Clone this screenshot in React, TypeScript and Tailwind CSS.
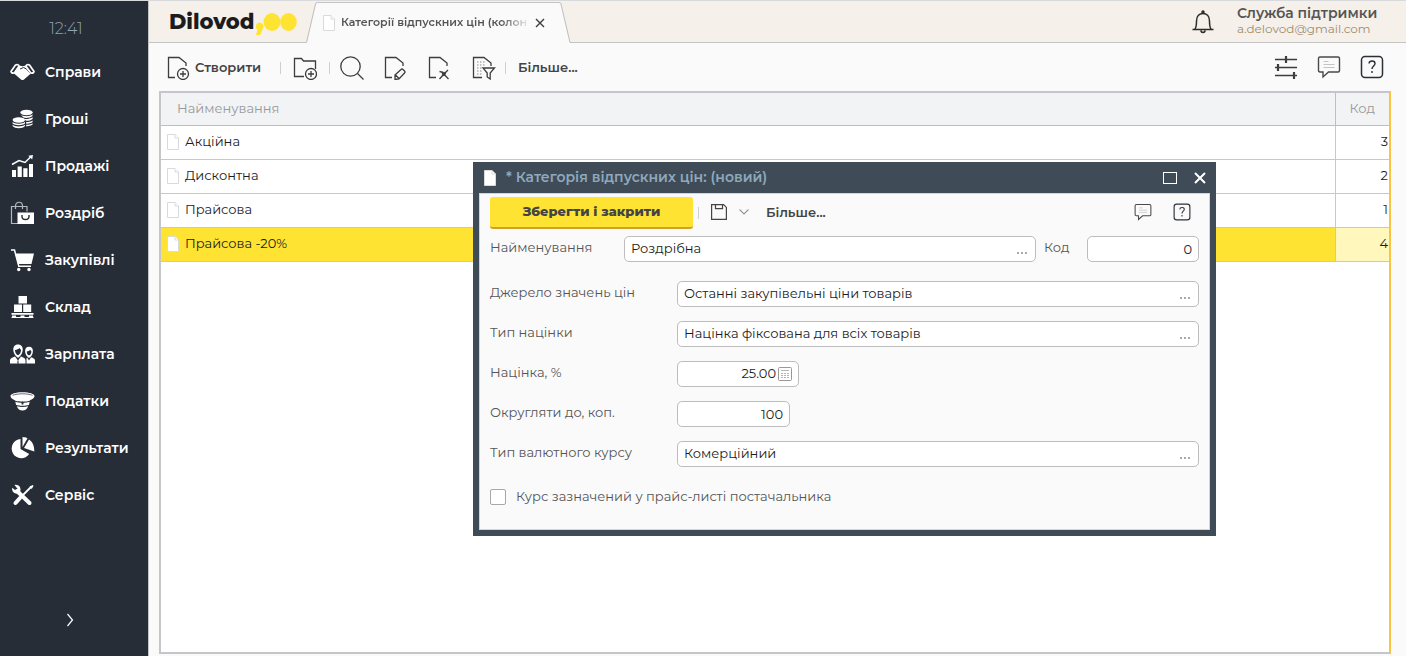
import type { ReactNode } from 'react';

const navItems: { label: string; icon: ReactNode }[] = [
  {
    label: 'Справи',
    icon: (
      <>
        <path d="M9 5.500l3.500.7 3.500-.7 5.500 7.500-7.800 6.700q-1.200.8-2.400 0L3.500 13z" />
        <path d="m10 9 3.500-1.500 3 1.500 4 4.500" fill="none" stroke="#272d37" strokeWidth="1" />
        <path d="M1 11.500 5.500 5q3-1 3.500 1.200L4.200 13q-3 .5-3.200-1.500zM24 11.500 19.500 5q-3-1-3.500 1.200L20.800 13q3 .5 3.200-1.500z" fill="#272d37" stroke="white" strokeWidth="1.700" strokeLinejoin="round" />
      </>
    ),
  },
  {
    label: 'Гроші',
    icon: (
      <>
        <ellipse cx="16.500" cy="5.500" rx="6.200" ry="2.800" />
        <path d="M10.500 7.500c2 2 9 2.500 12 0v1.500c-2 2-7 2.300-9 1.500zM14 12c3 .3 6.500-.2 8.600-1.700V12c-2 1.500-4.500 2-6.600 1.800zM16.200 15c2.500 0 4.800-.5 6.400-1.600V15c-1.500 1.300-4 1.800-6.400 1.700zM16.200 17.800c2.500 0 4.800-.5 6.400-1.600v1.300c-1.500 1.300-4 1.800-6.400 1.700z" />
        <ellipse cx="8.800" cy="13" rx="6.200" ry="2.700" />
        <path d="M2.600 15c2.500 2.300 9.500 2.300 12.400 0v1.500c-2.500 2.200-9.900 2.200-12.400 0zM2.600 17.800c2.500 2.300 9.500 2.300 12.400 0v1.200c-2.500 3-9.900 3-12.400 0z" />
      </>
    ),
  },
  {
    label: 'Продажі',
    icon: (
      <>
        <path d="M2 16h4v7H2zM7.600 12.500h4.200V23H7.600zM13.300 14.200h4.200V23h-4.200zM19 10h4v13h-4z" />
        <path d="m2 10.500 7-4 6 2 5.500-5.500" fill="none" stroke="white" strokeWidth="1.500" />
        <path d="m18.300 1.700 4.700-.7-.8 4.500z" />
      </>
    ),
  },
  {
    label: 'Роздріб',
    icon: (
      <>
        <path d="M8 22.500H1.500v-17H17v5M5.500 8V5c0-5 7-5 7 0v3" fill="none" stroke="#b3b8be" strokeWidth="1.200" />
        <path d="M7.500 11.500H24V23H7.500z" />
        <path d="M12 14v1.500c0 4 7 4 7 0V14" fill="none" stroke="#272d37" strokeWidth="1.400" />
      </>
    ),
  },
  {
    label: 'Закупівлі',
    icon: (
      <>
        <path d="M5 5.500h19L21.500 16H8z" />
        <path d="M1 2h3.500l4.300 16.300H21" fill="none" stroke="white" strokeWidth="1.500" />
        <circle cx="8.700" cy="21.500" r="1.700" />
        <circle cx="19" cy="21.500" r="1.700" />
      </>
    ),
  },
  {
    label: 'Склад',
    icon: (
      <>
        <path d="M8.500 1H17v7.500H8.500zM4 9.500h8v7.500H4zM13.200 9.500h8v7.500h-8zM1.500 18h22v1.700h-22zM2 20.500h4v2H2zM10.500 20.500h4v2h-4zM19 20.500h4v2h-4z" />
        <path d="M1.500 22.500h22" fill="none" stroke="white" strokeWidth="1" />
      </>
    ),
  },
  {
    label: 'Зарплата',
    icon: (
      <>
        <path d="M8 2.500c3.500 0 4.800 2.500 4.700 5.300-.1 2.700-1.200 4.700-2.500 6.200L8 16l-2.200-2C4.500 12.500 3.400 10.500 3.300 7.800 3.200 5 4.500 2.500 8 2.500z" />
        <path d="M5 8c2-.2 3.500-.8 4.500-2L11 8c0 2.500-1.500 5-3 5s-3-2.500-3-5z" fill="#272d37" />
        <path d="M0 21.500v-3.300c0-2 2.500-2.800 5-3.700l3 4 3-4c2.500.9 4.500 1.700 4.500 3.700v3.300z" />
        <path d="M19 4.800c2.800 0 4 2 3.900 4.400 0 2.300-1 4-2 5.300L19 16l-1.900-1.500c-1-1.300-2-3-2-5.300C15 6.800 16.200 4.800 19 4.800z" />
        <path d="M16.800 9.500c1.300-.2 2.500-.7 3.400-1.700l1.200 1.700c0 2-1.200 3.800-2.400 3.800s-2.200-1.800-2.200-3.800z" fill="#272d37" />
        <path d="M16.500 21.500V16.500l.700-1 1.800 3 2-3.300c2 .7 4 1.300 4 3.300v3z" />
        <path d="m8 17-.800 4.500h1.600z" fill="#272d37" />
      </>
    ),
  },
  {
    label: 'Податки',
    icon: (
      <>
        <path d="M.5 7c0-2 5-3.700 12-3.700s12 1.700 12 3.700c0 2.500-3 3.500-5 4.800-4 1.200-10 1.200-14 0C3.500 10.500.5 9.500.5 7z" />
        <path d="M2.500 6.300c5-2 15-2 20 0" fill="none" stroke="#272d37" strokeWidth=".7" />
        <path d="M5.300 12.800c4 1.300 10.400 1.300 14.400 0l-.800 3.200c-3.500 1-9.300 1-12.800 0z" />
        <path d="m12.500 12.300 1.200 1-.400 2.200h-1.600l-.400-2.200z" fill="#272d37" />
        <path d="M6.800 17.300c3.500.9 7.900.9 11.400 0-1 2.800-3 4.300-5.700 4.300s-4.700-1.500-5.700-4.300z" />
      </>
    ),
  },
  {
    label: 'Результати',
    icon: (
      <>
        <path d="M10.500 3v10l8.700 5A9.600 9.600 0 1 1 10.500 3z" />
        <path d="M12.500 1c2 .1 3.500.5 5 1.200L12.500 11zM19 3.500c3.500 2.300 5.500 6.500 5.300 12L14 12z" />
      </>
    ),
  },
  {
    label: 'Сервіс',
    icon: (
      <>
        <path d="m7 8 12.500 12" stroke="white" strokeWidth="4" strokeLinecap="round" />
        <path d="M4.500 2C8 1 11.500 4 10.300 8.300L8 10.700C4.500 11.200 1.500 8.500 2.200 4.800l3.500 2.700 1.800-1.800z" />
        <path d="m21.500 3.500-9 9" stroke="white" strokeWidth="1.800" />
        <path d="m19.500 3.700 3.200-1.700.8.8-1.700 3.200z" />
        <path d="m10 15-4.500 5" stroke="white" strokeWidth="4" strokeLinecap="round" />
      </>
    ),
  },
];

const rows = [
  { name: 'Акційна', code: 3 },
  { name: 'Дисконтна', code: 2 },
  { name: 'Прайсова', code: 1 },
  { name: 'Прайсова -20%', code: 4, selected: true },
];

function LineIcon({ children }: { children: ReactNode }) {
  return (
    <svg viewBox="0 0 24 24" className="h-6 w-6 shrink-0" fill="none" stroke="#3d3d3d" strokeWidth="1.300">
      {children}
    </svg>
  );
}

function DocIcon({ className = '' }: { className?: string }) {
  return (
    <svg viewBox="0 0 12 16" className={`h-4 w-3 shrink-0 ${className}`} fill="white" stroke="#dadada">
      <path d="M.5.5h7.500l3.500 3.500v11.500H.5z" />
      <path d="M8 .5V4h3.500" />
    </svg>
  );
}

function ChatIcon({ className }: { className: string }) {
  return (
    <svg viewBox="0 0 24 24" className={className} fill="none" stroke="#4a4a4a" strokeWidth="1.400">
      <path d="M3 2h18q1.500 0 1.500 1.500v12q0 1.500-1.500 1.500H11.500L6 22v-5H3q-1.500 0-1.500-1.500v-12Q1.500 2 3 2z" />
      <path d="M6.500 6.500h5M6.500 9.500h11M6.500 12.500h11" stroke="#c4c4c4" strokeWidth="1" />
    </svg>
  );
}

function HelpIcon({ className }: { className: string }) {
  return (
    <svg viewBox="0 0 24 24" className={className} fill="none" stroke="#2b2f36" strokeWidth="1.500">
      <rect x="1.500" y="1.500" width="21" height="21" rx="3.500" />
      <path d="M9 8.500c.3-3.300 6-3.300 6 0 0 2.500-3 2.500-3 5.500M12 16v2" strokeWidth="1.400" />
    </svg>
  );
}

function Separator() {
  return <span className="h-3 w-px shrink-0 bg-[#cfcfcf]" />;
}

function Sidebar() {
  return (
    <aside className="flex w-[148px] shrink-0 flex-col bg-[#272d37]">
      <time className="mt-4 pr-4 text-center text-base leading-6 font-light text-[#8fa3b3]">12:41</time>
      <nav className="mt-[7px]">
        {navItems.map((item) => (
          <a
            key={item.label}
            href="#"
            className="flex h-[47px] items-center gap-[10px] pl-[10px] text-sm font-semibold text-white"
          >
            <svg viewBox="0 0 25 24" className="h-6 w-[25px] shrink-0" fill="white">
              {item.icon}
            </svg>
            {item.label}
          </a>
        ))}
      </nav>
      <button aria-label="Згорнути меню" className="mt-auto mb-6 ml-[58px] flex h-6 w-6 items-center justify-center">
        <svg viewBox="0 0 8 14" className="h-[14px] w-2" fill="none" stroke="white" strokeWidth="1.200">
          <path d="m1.500 1 5 6-5 6" />
        </svg>
      </button>
    </aside>
  );
}

function Logo() {
  return (
    <div className="flex h-full w-[157px] items-center border-b border-[#c4c4c4] pl-5">
      <span className="w-[86px] text-[21px] font-extrabold whitespace-nowrap text-[#1c1c1c]">Dilovod</span>
      <svg viewBox="0 0 42 24" className="mt-1 h-6 w-[42px] shrink-0" fill="#ffe332">
        <path d="M4.500 10.500a4 4 0 0 1 3.800 5.500L5.200 23H1l1.400-5.300A4 4 0 0 1 4.500 10.500z" />
        <ellipse cx="17" cy="10" rx="8.500" ry="9" />
        <ellipse cx="33.500" cy="10" rx="8.300" ry="9" />
      </svg>
    </div>
  );
}

function TopBar() {
  return (
    <header className="flex h-[42px] shrink-0 bg-[#f5f0ea]">
      <Logo />
      <svg viewBox="0 0 11 42" className="h-[42px] w-[11px] shrink-0">
        <path d="M0 42 1 41 10 3l1-2v41z" fill="#fafafa" />
        <path d="M0 41.500h.5L9.500 3q.5-1.500 1.500-1.500" fill="none" stroke="#bdbdbd" />
      </svg>
      <div className="mt-px flex w-[242px] items-center border-t border-[#c4c4c4] bg-[#fafafa] pr-[14px] pl-[6px] pb-px">
        <DocIcon />
        <span className="ml-[6px] flex-1 overflow-hidden mask-r-from-85% text-[11px] font-semibold whitespace-nowrap text-[#555]">
          Категорії відпускних цін (колон
        </span>
        <button aria-label="Закрити вкладку" className="ml-[5px]">
          <svg viewBox="0 0 10 10" className="h-[10px] w-[10px]" stroke="#3d3d3d" strokeWidth="1.400">
            <path d="m1 1 8 8M9 1 1 9" />
          </svg>
        </button>
      </div>
      <svg viewBox="0 0 12 42" className="h-[42px] w-3 shrink-0">
        <path d="M0 1.500 2 3l9 38 1 1H0z" fill="#fafafa" />
        <path d="M0 1.500q1.500 0 2 1.500l9 38.500h1" fill="none" stroke="#bdbdbd" />
      </svg>
      <div className="flex flex-1 items-center justify-end border-b border-[#c4c4c4]">
        <button aria-label="Сповіщення">
          <svg viewBox="0 0 24 24" className="h-6 w-6" fill="none" stroke="#2b2b2b" strokeWidth="1.500">
            <path d="M1.500 19.500h21M4 19c1.500-2 1.500-3.500 1.500-8 0-5 3-7.500 6.500-7.500s6.500 2.500 6.500 7.500c0 4.500 0 6 1.500 8M10 20.500c0 2.500 4 2.500 4 0" />
            <circle cx="12" cy="2" r="1" fill="#2b2b2b" />
          </svg>
        </button>
        <div className="ml-[22px] w-[169px] pb-px">
          <div className="text-sm leading-4 font-semibold text-[#555]">Служба підтримки</div>
          <div className="text-xs leading-4 text-[#a08c70]">a.delovod@gmail.com</div>
        </div>
      </div>
    </header>
  );
}

function Toolbar() {
  return (
    <div className="flex h-12 shrink-0 items-center pt-[2px] pr-[22px] pl-[18px] text-[13px] font-semibold text-[#444]">
      <button className="flex w-[113px] items-center gap-1">
        <LineIcon>
          <path d="M8 21.500H1.500v-20H12l7 5.500v3" />
          <circle cx="16" cy="18" r="5.500" />
          <path d="M16 15v6M13 18h6" />
        </LineIcon>
        Створити
      </button>
      <Separator />
      <button aria-label="Створити групу" className="mx-3">
        <LineIcon>
          <path d="M11 20.500H1.500v-18h7l2 2.500H22.500v8" />
          <circle cx="18" cy="18" r="5.500" />
          <path d="M18 15v6M15 18h6" />
        </LineIcon>
      </button>
      <Separator />
      <div className="mr-[9px] ml-[10px] flex gap-5">
        <button aria-label="Пошук">
          <LineIcon>
            <circle cx="10.500" cy="10.500" r="9.700" />
            <path d="m17.500 17.500 6 6" />
          </LineIcon>
        </button>
        <button aria-label="Редагувати">
          <LineIcon>
            <path d="M8 21.500H1.500v-20H12l7 5.500v3" />
            <path d="m11 19 6-5.500q1-1 2 0l1.500 1.500q1 1 0 2L15 23l-4 .5zM11.500 19l3.500 3.500" />
          </LineIcon>
        </button>
        <button aria-label="Видалити">
          <LineIcon>
            <path d="M8 21.500H1.500v-20H12l7 5.500v3" />
            <path d="M11.500 15.500 14 16l6.500 7M20 14l-4 4-4.500 5" />
            <path d="m14 16 3 3.500M17.500 16.500l-3 3" strokeWidth="2" />
          </LineIcon>
        </button>
        <button aria-label="Фільтр">
          <LineIcon>
            <path d="M10 21.500H1.500v-20H12l7 5.500v3" />
            <path d="M5 6h9M5 9h9M5 12h5M5 15h5M5 18h5" strokeDasharray="1.500 1.500" strokeWidth="1.200" stroke="#8a8a8a" />
            <path d="M11 12h11.500l-4.300 5v6l-3-2v-4z" />
          </LineIcon>
        </button>
      </div>
      <Separator />
      <button className="ml-3">Більше...</button>
      <div className="ml-auto flex gap-[19px] pb-[2px]">
        <button aria-label="Налаштування">
          <LineIcon>
            <path d="M1 4.500h22M1 12.500h22M1 20.500h22" strokeWidth="1.500" />
            <path d="M12 1v7M4 9v7M20 17v7" strokeWidth="2.200" />
          </LineIcon>
        </button>
        <button aria-label="Коментарі">
          <ChatIcon className="h-6 w-6" />
        </button>
        <button aria-label="Довідка">
          <HelpIcon className="h-6 w-6" />
        </button>
      </div>
    </div>
  );
}

function PriceTable() {
  return (
    <div className="mr-[15px] mb-[2px] ml-[10px] flex-1 border border-[#f9c440]">
      <div className="h-full border border-[#c4c6ca] bg-white">
        <table className="w-full border-collapse text-[13px] text-[#1c1c1c]">
          <thead>
            <tr className="h-8 border-b border-[#bfbfbf] bg-[#f1f3f5] text-[#999]">
              <th className="pl-4 text-left font-normal">Найменування</th>
              <th className="w-[54px] border-l border-[#bfbfbf] text-center font-normal">Код</th>
            </tr>
          </thead>
          <tbody>
            {rows.map((row) => (
              <tr key={row.name} className={`h-[34px] border-b border-[#c8c8c8] ${row.selected ? 'bg-[#ffe332]' : ''}`}>
                <td className="pl-[6px]">
                  <div className="flex items-center gap-[6px]">
                    <DocIcon />
                    {row.name}
                  </div>
                </td>
                <td className={`border-l border-[#c8c8c8] pr-px text-right ${row.selected ? 'bg-[#fff7bb]' : ''}`}>
                  {row.code}
                </td>
              </tr>
            ))}
          </tbody>
        </table>
      </div>
    </div>
  );
}

function PickerInput({ id, value }: { id: string; value: string }) {
  return (
    <div className="flex h-[26px] min-w-0 flex-1 items-center rounded-[5px] border border-[#bdbdbd] bg-white pr-2 pl-[6px]">
      <input id={id} defaultValue={value} className="min-w-0 flex-1 text-[#1c1c1c] outline-none" />
      <button type="button" aria-label="Вибрати" className="mt-2 flex gap-[2px]">
        <span className="h-[2px] w-[2px] bg-[#aaa]" />
        <span className="h-[2px] w-[2px] bg-[#aaa]" />
        <span className="h-[2px] w-[2px] bg-[#aaa]" />
      </button>
    </div>
  );
}

function FormRow({ id, label, children }: { id: string; label: string; children: ReactNode }) {
  return (
    <div className="flex items-center">
      <label htmlFor={id} className="w-[187px] shrink-0 pb-[2px]">
        {label}
      </label>
      {children}
    </div>
  );
}

function CategoryDialog() {
  return (
    <div
      role="dialog"
      aria-labelledby="dialog-title"
      className="absolute top-[161px] left-[473px] w-[743px] bg-[#3f4c57] px-[6px] pb-[6px] text-[13px]"
    >
      <div className="flex h-[31px] items-center pr-1 pl-[5px]">
        <DocIcon />
        <h2 id="dialog-title" className="ml-[10px] pb-[2px] text-sm font-semibold text-[#8fa9bd]">
          * Категорія відпускних цін: (новий)
        </h2>
        <button aria-label="Розгорнути" className="ml-auto h-3 w-[14px] border border-white" />
        <button aria-label="Закрити" className="ml-[17px]">
          <svg viewBox="0 0 12 12" className="h-3 w-3" stroke="white" strokeWidth="2">
            <path d="m1 1 10 10M11 1 1 11" />
          </svg>
        </button>
      </div>
      <form className="border border-[#d5d5d5] bg-[#fafafa] px-[10px] pt-[3px] pb-[22px] text-[#555]">
        <div className="flex h-8 items-center font-semibold text-[#444]">
          <button type="button" className="h-8 w-[203px] rounded-[3px] border-b-2 border-[#cfa02c] bg-[#ffe332] font-extrabold">
            Зберегти і закрити
          </button>
          <span className="ml-[5px] h-3 w-px bg-[#cfcfcf]" />
          <button type="button" aria-label="Зберегти" className="ml-3 pb-[3px]">
            <svg viewBox="0 0 16 16" className="h-4 w-4" fill="none" stroke="#444" strokeWidth="1.200">
              <path d="M.6.6h12l2.800 2.800v12H.6zM4.500.6v4h7v-4" />
            </svg>
          </button>
          <button type="button" aria-label="Варіанти збереження" className="ml-3 pb-[3px]">
            <svg viewBox="0 0 10 6" className="h-[6px] w-[10px]" fill="none" stroke="#999" strokeWidth="1.200">
              <path d="m.5.5 4.500 4.500 4.500-4.500" />
            </svg>
          </button>
          <button type="button" className="ml-[17px]">Більше...</button>
          <button type="button" aria-label="Коментарі" className="ml-auto pb-[3px]">
            <ChatIcon className="h-[18px] w-[18px]" />
          </button>
          <button type="button" aria-label="Довідка" className="mr-2 ml-[21px] pb-[3px]">
            <HelpIcon className="h-[18px] w-[18px]" />
          </button>
        </div>
        <div className="mt-[7px] flex items-center">
          <label htmlFor="name" className="w-[134px] shrink-0 pb-[2px]">
            Найменування
          </label>
          <PickerInput id="name" value="Роздрібна" />
          <label htmlFor="code" className="ml-2 w-[43px] shrink-0 pb-[2px]">
            Код
          </label>
          <input
            id="code"
            defaultValue="0"
            className="h-[26px] w-[112px] rounded-[5px] border border-[#bdbdbd] bg-white px-[6px] pb-px text-right text-[#1c1c1c]"
          />
        </div>
        <div className="mt-[19px] flex flex-col gap-[14px]">
          <FormRow id="source" label="Джерело значень цін">
            <PickerInput id="source" value="Останні закупівельні ціни товарів" />
          </FormRow>
          <FormRow id="markup-type" label="Тип націнки">
            <PickerInput id="markup-type" value="Націнка фіксована для всіх товарів" />
          </FormRow>
          <FormRow id="markup" label="Націнка, %">
            <div className="flex h-[26px] w-[122px] items-center gap-[2px] rounded-[5px] border border-[#bdbdbd] bg-white px-[6px]">
              <input id="markup" defaultValue="25.00" className="min-w-0 flex-1 text-right text-[#1c1c1c] outline-none" />
              <button type="button" aria-label="Калькулятор">
                <svg viewBox="0 0 14 14" className="h-[14px] w-[14px]" fill="none" stroke="#999">
                  <rect x=".5" y=".5" width="13" height="13" rx="1" />
                  <path d="M3 3.500h8" stroke="#b5b5b5" />
                  <path d="M3 6.500h8M3 8.500h8M3 10.500h8" stroke="#b5b5b5" strokeDasharray="2 1" />
                </svg>
              </button>
            </div>
          </FormRow>
          <FormRow id="rounding" label="Округляти до, коп.">
            <input
              id="rounding"
              defaultValue="100"
              className="h-[26px] w-[113px] rounded-[5px] border border-[#bdbdbd] bg-white px-[6px] pb-px text-right text-[#1c1c1c]"
            />
          </FormRow>
          <FormRow id="rate-type" label="Тип валютного курсу">
            <PickerInput id="rate-type" value="Комерційний" />
          </FormRow>
        </div>
        <label className="mt-5 flex items-center gap-[10px]">
          <input type="checkbox" className="h-4 w-4 appearance-none rounded-[2px] border border-[#a8a8a8] bg-white" />
          Курс зазначений у прайс-листі постачальника
        </label>
      </form>
    </div>
  );
}

export default function App() {
  return (
    <div className="relative flex h-screen min-h-[560px] border-t border-[#d9dade] bg-[#fafafa] font-['Montserrat','Inter',sans-serif]">
      <Sidebar />
      <main className="flex min-w-0 flex-1 flex-col border-l border-[#c4c4c4]">
        <TopBar />
        <Toolbar />
        <PriceTable />
      </main>
      <CategoryDialog />
    </div>
  );
}
